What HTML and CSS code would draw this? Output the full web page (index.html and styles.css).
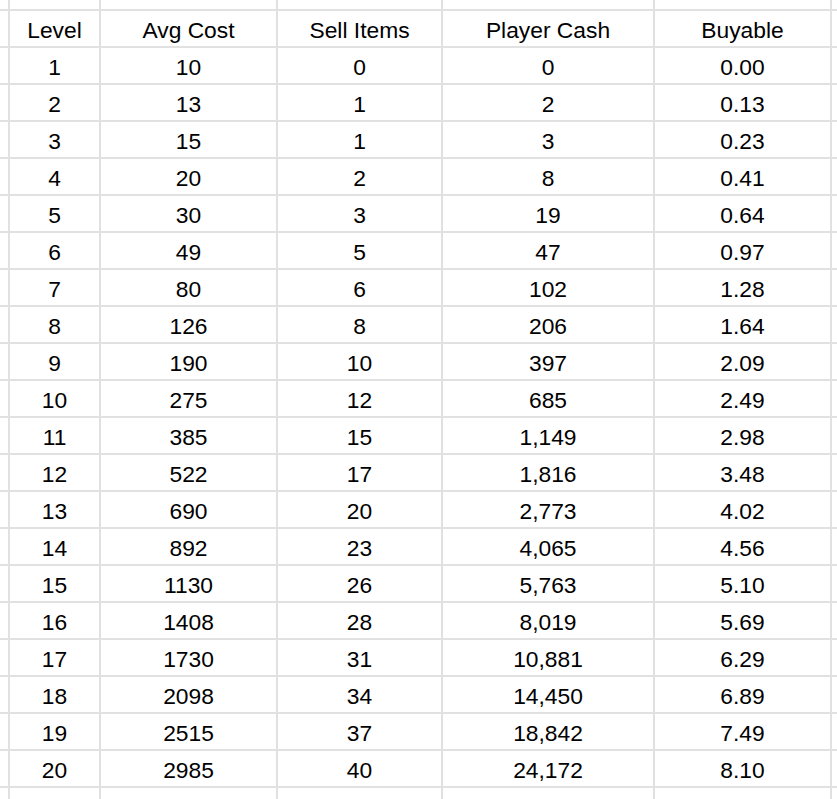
FILE: index.html
```html
<!DOCTYPE html>
<html>
<head>
<meta charset="utf-8">
<link rel="stylesheet" href="styles.css">
</head>
<body>
<div class="sheet" id="sheet">
</div>
<script>
const rows = [
["Level","Avg Cost","Sell Items","Player Cash","Buyable"],
["1","10","0","0","0.00"],
["2","13","1","2","0.13"],
["3","15","1","3","0.23"],
["4","20","2","8","0.41"],
["5","30","3","19","0.64"],
["6","49","5","47","0.97"],
["7","80","6","102","1.28"],
["8","126","8","206","1.64"],
["9","190","10","397","2.09"],
["10","275","12","685","2.49"],
["11","385","15","1,149","2.98"],
["12","522","17","1,816","3.48"],
["13","690","20","2,773","4.02"],
["14","892","23","4,065","4.56"],
["15","1130","26","5,763","5.10"],
["16","1408","28","8,019","5.69"],
["17","1730","31","10,881","6.29"],
["18","2098","34","14,450","6.89"],
["19","2515","37","18,842","7.49"],
["20","2985","40","24,172","8.10"]
];
const s = document.getElementById('sheet');
function cell(t){ const d=document.createElement('div'); d.className='cell'; d.textContent=t; s.appendChild(d); }
for(let i=0;i<7;i++) cell('');
for(const r of rows){ cell(''); r.forEach(v=>cell(v)); cell(''); }
for(let i=0;i<7;i++) cell('');
</script>
</body>
</html>
```
FILE: styles.css
```css
html, body {
  margin: 0;
  padding: 0;
  background: #fff;
  overflow: hidden;
}
.sheet {
  display: grid;
  grid-template-columns: 8px 89px 175px 163px 210px 175px 5px;
  grid-template-rows: 9px repeat(21, 35px) 11px;
  gap: 2px;
  background: #e1e1e1;
  width: 837px;
  font-family: "Liberation Sans", Arial, sans-serif;
  font-size: 22.8px;
  color: #000;
}
.cell {
  background: #fff;
  display: flex;
  align-items: flex-end;
  justify-content: center;
  padding-bottom: 4px;
  box-sizing: border-box;
  line-height: 1;
  white-space: nowrap;
  overflow: hidden;
}
```
